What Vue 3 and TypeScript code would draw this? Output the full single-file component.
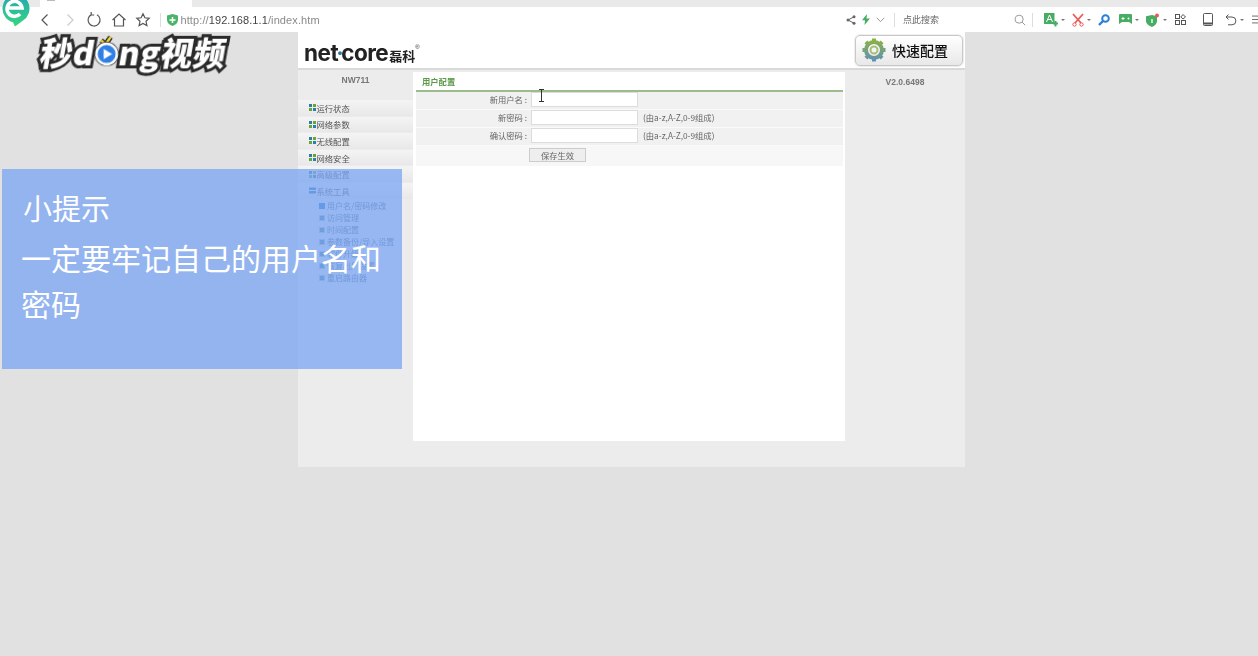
<script setup lang="ts">
const menu = ['运行状态', '网络参数', '无线配置', '网络安全', '高级配置']
const sub = ['用户名/密码修改', '访问管理', '时间配置', '参数备份/导入设置', '软件升级', '恢复出厂设置', '重启路由器']
const rows = [
  { label: '新用户名 :', hint: '' },
  { label: '新密码 :', hint: '(由a-z,A-Z,0-9组成)' },
  { label: '确认密码 :', hint: '(由a-z,A-Z,0-9组成)' },
]
</script>

<template>
  <div class="screen">
    <div class="tabs"><div class="tab"><i></i></div></div>
    <div class="toolbar">
      <div class="nav">
        <svg width="18" height="18" viewBox="0 0 18 18" class="ic"><path d="M11.500 3.500 6 9l5.500 5.500" /></svg>
        <svg width="18" height="18" viewBox="0 0 18 18" class="ic faint"><path d="M6.500 3.500 12 9l-5.500 5.500" /></svg>
        <svg width="18" height="18" viewBox="0 0 18 18" class="ic"><path d="M6.500 3.600A6 6 0 1 0 12 3.800M6.200 1v3h3" /></svg>
        <svg width="18" height="18" viewBox="0 0 18 18" class="ic"><path d="M2.500 9 9 3l6.500 6M4.500 8v7h9V8" /></svg>
        <svg width="18" height="18" viewBox="0 0 18 18" class="ic"><path d="m9 2.800 1.900 4 4.300.5-3.200 3 .9 4.300L9 12.500l-3.900 2.100.9-4.300-3.200-3 4.300-.5z" /></svg>
        <span class="sep"></span>
        <svg width="11" height="12" viewBox="0 0 11 12"><path d="M5.500 0 11 1.500V6c0 3-2.500 5-5.500 6C2.500 11 0 9 0 6V1.500z" fill="#4cb36b" /><path d="M5.500 3v6M2.500 6h6" stroke="#fff" stroke-width="1.500" /></svg>
        <span class="url">http://<b>192.168.1.1</b>/index.htm</span>
      </div>
      <div class="tools">
        <svg width="10" height="10" viewBox="0 0 10 10"><circle cx="8" cy="1.800" r="1.500" fill="#666" /><circle cx="2" cy="5" r="1.500" fill="#666" /><circle cx="8" cy="8.200" r="1.500" fill="#666" /><path d="M8 1.800 2 5l6 3.200" stroke="#666" fill="none" /></svg>
        <svg class="bolt" width="8" height="11" viewBox="0 0 8 11"><path d="M5 0 0 6.200h3L2.500 11 8 4.500H4.500z" fill="#46ad63" /></svg>
        <svg class="chev" width="9" height="6" viewBox="0 0 9 6"><path d="m.7.800 3.800 3.800L8.300.8" stroke="#999" fill="none" /></svg>
        <span class="sep"></span>
        <span class="search">点此搜索</span>
        <svg width="12" height="12" viewBox="0 0 12 12"><circle cx="5.200" cy="5.200" r="4" stroke="#999" fill="none" /><path d="m8.200 8.200 3 3" stroke="#999" /></svg>
        <span class="sep s2"></span>
        <span class="tool w1">
          <svg width="14" height="14" viewBox="0 0 14 14"><path d="M0 0h10.500v11H0z" fill="#46ad63" /><path d="M9 10.500h5M11.500 8v5.500" stroke="#46ad63" stroke-width="2" /><path d="m2.500 9 3-7 3 7M3.500 6.500h4" stroke="#fff" fill="none" /></svg><em></em>
        </span>
        <span class="tool w2">
          <svg width="12" height="14" viewBox="0 0 12 14"><path d="m1 1 8 9M11 1l-8 9" stroke="#ec5a58" stroke-width="1.800" /><circle cx="2.500" cy="11.500" r="1.700" stroke="#ec5a58" fill="none" /><circle cx="9.500" cy="11.500" r="1.700" stroke="#ec5a58" fill="none" /></svg><em></em>
        </span>
        <span class="tool w3">
          <svg width="12" height="12" viewBox="0 0 12 12"><circle cx="7.500" cy="4.500" r="3.300" stroke="#2b7fd8" stroke-width="2" fill="none" /><path d="M5 7 1 11" stroke="#2b7fd8" stroke-width="2.400" /></svg>
        </span>
        <span class="tool w4">
          <svg width="13" height="11" viewBox="0 0 13 11"><path d="M1 0h11a1 1 0 0 1 1 1v9l-3-2H3l-3 2V1a1 1 0 0 1 1-1z" fill="#46ad63" /><path d="M2.500 4.500h3M4 3v3" stroke="#fff" /><circle cx="9.500" cy="4.500" r="1" fill="#fff" /></svg><em></em>
        </span>
        <span class="tool w5">
          <svg width="14" height="14" viewBox="0 0 14 14"><path d="M6 2 11 3.200V8c0 3-2.500 5-5 6-2.500-1-6-3-6-6V3.200z" fill="#46ad63" /><path d="M6 6v4" stroke="#bde5c8" stroke-width="2" /><circle cx="11" cy="2.500" r="2" fill="#ec5a58" /></svg><em></em>
        </span>
        <span class="tool w6">
          <svg width="11" height="11" viewBox="0 0 11 11" class="line"><rect x=".5" y=".5" width="4" height="4" /><path d="M8 .5 10.500 3 8 5 5.800 3z" /><rect x=".5" y="6.500" width="4" height="4" /><rect x="6.500" y="6.500" width="4" height="4" /></svg>
        </span>
        <span class="tool w7">
          <svg width="10" height="13" viewBox="0 0 10 13" class="line"><rect x=".5" y=".5" width="9" height="12" rx="1" /><path d="M1 10.500h8" stroke-width="2" /></svg>
        </span>
        <span class="tool w8">
          <svg width="12" height="12" viewBox="0 0 12 12" class="line"><path d="M3.500.5 1 3l2.500 2.500M1 3h6a3.800 3.800 0 0 1 0 7.800H3" /></svg><em></em>
        </span>
        <span class="tool w9">
          <svg width="7" height="9" viewBox="0 0 7 9" class="line"><path d="M0 .5h7M0 4.500h7M0 8.500h7" /></svg>
        </span>
      </div>
    </div>

    <div class="logo-e">
      <svg width="30" height="27" viewBox="0 0 30 27">
        <defs><linearGradient id="eg" x1="0" y1="0" x2="0" y2="1"><stop offset="0" stop-color="#1fa6b8" /><stop offset="1" stop-color="#39d67d" /></linearGradient></defs>
        <path d="M15-6a14.500 14.500 0 0 1 8 26.600L15 26.500l-2-4.200A14.500 14.500 0 0 1 15-6z" fill="url(#eg)" />
        <path d="M7 8h15A7.500 7.500 0 1 0 20 14" stroke="#fff" stroke-width="3.600" fill="none" />
      </svg>
    </div>

    <div class="brand">
      <span>秒d</span><span class="play"><svg width="25" height="32" viewBox="0 0 25 32">
        <path d="M7 6.500 11.500 10l5-7" stroke="#222" stroke-width="5" fill="none" />
        <path d="M7 6.500 11.500 10l5-7" stroke="#f2d83a" stroke-width="2.400" fill="none" />
        <circle cx="12.500" cy="20" r="11.500" fill="#fff" stroke="#222" stroke-width="1.500" />
        <circle cx="12.500" cy="20" r="9" fill="#2f80e6" />
        <path d="M9.500 14.800v10.400l8.500-5.200z" fill="#fff" />
      </svg></span><span>ng视频</span>
    </div>

    <div class="page">
      <header class="head">
        <div class="nc"><span class="nc-en">net<i>·</i>core</span><span class="nc-cn">磊科</span><sup>®</sup></div>
        <div class="quick">
          <svg width="24" height="24" viewBox="0 0 24 24">
            <defs><linearGradient id="gg" gradientUnits="userSpaceOnUse" x1="0" y1="0" x2="0" y2="24"><stop offset="0" stop-color="#8fb53a" /><stop offset="1" stop-color="#5f8ebd" /></linearGradient></defs>
            <circle cx="12" cy="12" r="8" fill="none" stroke="url(#gg)" stroke-width="4" />
            <path d="M12 .5v4M12 19.500v4M.5 12h4M19.500 12h4M3.900 3.900l2.800 2.800M17.300 17.300l2.800 2.800M20.100 3.900l-2.800 2.800M6.700 17.300l-2.800 2.800" stroke="url(#gg)" stroke-width="4" />
            <circle cx="12" cy="12" r="3.500" fill="none" stroke="#a9bd7a" stroke-width="2" />
          </svg>
          <span>快速配置</span>
        </div>
      </header>
      <div class="body">
        <aside class="side">
          <div class="model">NW711</div>
          <div v-for="m in menu" :key="m" class="menu">
            <svg width="7" height="7" viewBox="0 0 7 7"><path d="M0 0h3v3H0z" fill="#2a7fa8" /><path d="M4 0h3v3H4z" fill="#6aa33a" /><path d="M0 4h3v3H0z" fill="#6aa33a" /><path d="M4 4h3v3H4z" fill="#2a7fa8" /></svg>
            {{ m }}
          </div>
          <div class="menu">
            <svg width="7" height="7" viewBox="0 0 7 7"><path d="M0 .5h7v2.500H0zM0 4h7v2.500H0z" fill="#2a6fa8" /></svg>
            系统工具
          </div>
          <div class="subs">
            <div v-for="(s, i) in sub" :key="s" class="sub">
              <span class="dot" :class="{ on: i === 0 }"></span>{{ s }}
            </div>
          </div>
        </aside>
        <main class="main">
          <div class="title">用户配置</div>
          <div v-for="r in rows" :key="r.label" class="row">
            <label>{{ r.label }}</label>
            <span class="input"></span>
            <span class="hint">{{ r.hint }}</span>
          </div>
          <div class="row last"><label></label><span class="save">保存生效</span></div>
        </main>
        <aside class="ver">V2.0.6498</aside>
      </div>
    </div>

    <svg class="cursor" width="7" height="13" viewBox="0 0 7 13"><path d="M1 .5h5M1 12.500h5M3.500 .5v12" stroke="#333" fill="none" /></svg>

    <div class="tip">
      <div class="tip-h">小提示</div>
      <div class="tip-b">一定要牢记自己的用户名和密码</div>
    </div>
  </div>
</template>

<style scoped>
.screen {
  position: relative;
  width: 1258px;
  height: 656px;
  overflow: hidden;
  background: #e1e1e1;
  font-family: "Noto Sans CJK SC", "Liberation Sans", sans-serif;
}
.tabs {
  height: 7px;
  background: #e9e9e9;
  box-sizing: border-box;
  padding-left: 40px;
}
.tab {
  width: 152px;
  height: 7px;
  background: #fff;
}
.tab i {
  display: block;
  width: 8px;
  height: 1px;
  margin-left: 7px;
  background: #bbb;
}
.toolbar {
  height: 25px;
  background: #fff;
  display: flex;
  justify-content: space-between;
  align-items: center;
  filter: blur(0.3px);
}
.nav {
  display: flex;
  align-items: center;
  padding-left: 36px;
  gap: 6.500px;
}
.ic {
  fill: none;
  stroke: #555;
  stroke-width: 1.200;
}
.ic.faint {
  stroke: #ccc;
}
.sep {
  width: 1px;
  height: 14px;
  background: #ddd;
  margin: 0 4px 0 1px;
}
.nav .sep {
  margin: 0 0 0 1px;
}
.url {
  font: 11px "Liberation Sans", sans-serif;
  color: #8a8a8a;
  margin-left: -4px;
  letter-spacing: 0.1px;
}
.url b {
  font-weight: 400;
  color: #444;
}
.tools {
  display: flex;
  align-items: center;
}
.tools > svg:first-child {
  margin-right: 6px;
}
.chev {
  margin: 0 8px 0 6px;
}
.search {
  width: 111px;
  margin-left: 4px;
  font-size: 9px;
  color: #666;
}
.s2 {
  margin: 0 0 0 6px;
}
.tool {
  display: flex;
  align-items: center;
  box-sizing: border-box;
  height: 16px;
  flex: none;
}
.tool em {
  width: 0;
  height: 0;
  margin-left: 3px;
  border: 2px solid transparent;
  border-top: 2.500px solid #777;
  border-bottom: 0;
}
.w1 { width: 28px; margin-left: 11px; }
.w2 { width: 26px; }
.w3 { width: 21px; }
.w4 { width: 27px; }
.w5 { width: 29px; }
.w6 { width: 28px; }
.w7 { width: 22px; }
.w8 { width: 27px; }
.w9 { width: 6px; overflow: hidden; }
.line {
  fill: none;
  stroke: #555;
}
.logo-e {
  position: absolute;
  left: 0;
  top: 0;
  line-height: 0;
}
.brand {
  position: absolute;
  left: 41px;
  top: 26px;
  width: 200px;
  height: 50px;
  display: flex;
  align-items: center;
  font-size: 32px;
  letter-spacing: 0.7px;
  line-height: 50px;
  font-weight: 900;
  color: #fff;
  transform: skewX(-10deg);
  -webkit-text-stroke: 6px #2a2a2a;
  paint-order: stroke fill;
  white-space: nowrap;
  filter: blur(0.4px);
}
.play {
  width: 25px;
  height: 32px;
  margin: -2px 0 0 -1px;
  line-height: 0;
  transform: skewX(10deg);
}
.page {
  position: absolute;
  left: 298px;
  top: 32px;
  width: 667px;
  height: 435px;
  background: #ececec;
  display: flex;
  flex-direction: column;
  filter: blur(0.35px);
}
.head {
  height: 36px;
  background: #fff;
  border-bottom: 2px solid #d9d9d9;
  display: flex;
  align-items: center;
  justify-content: space-between;
  padding: 0 2px 0 6px;
}
.nc {
  display: flex;
  align-items: baseline;
  color: #222;
  white-space: nowrap;
  margin-top: 4px;
}
.nc-en {
  font: 700 22.500px "Inter", sans-serif;
  letter-spacing: -0.5px;
}
.nc-en i {
  font-style: normal;
  color: #2a7fa8;
  margin: 0 -2px;
}
.nc-cn {
  font-size: 13px;
  font-weight: 700;
  margin-left: 1px;
}
.nc sup {
  font: 6px "Liberation Sans", sans-serif;
  align-self: flex-start;
  margin-top: 5px;
}
.quick {
  width: 108px;
  height: 31px;
  box-sizing: border-box;
  border: 1px solid #c8c8c8;
  border-radius: 5px;
  background: linear-gradient(#fff, #e8e8e8);
  box-shadow: 0 0 0 1px #eee;
  display: flex;
  align-items: center;
  gap: 6px;
  padding-left: 6px;
  font-size: 14px;
  font-weight: 500;
  color: #111;
}
.body {
  flex: 1;
  display: flex;
  padding-top: 2px;
  align-items: flex-start;
}
.side {
  width: 115px;
  flex: none;
}
.model,
.ver {
  font: 700 8.500px/14px "Liberation Sans", sans-serif;
  color: #777;
  text-align: center;
  padding-top: 3px;
}
.model {
  height: 27px;
  box-sizing: border-box;
  margin-bottom: 1px;
  padding-top: 1px;
}
.menu {
  height: 16.600px;
  box-sizing: border-box;
  display: flex;
  align-items: center;
  gap: 0.500px;
  padding-left: 11px;
  font-size: 8.300px;
  color: #555;
  background: linear-gradient(#f4f4f4, #e8e8e8);
  border-bottom: 1px solid #ececec;
}
.subs {
  padding: 0 0 0 21px;
}
.sub {
  height: 12px;
  display: flex;
  align-items: center;
  gap: 2px;
  font-size: 8px;
  line-height: 12px;
  color: #4a6a80;
  white-space: nowrap;
}
.dot {
  width: 4px;
  height: 4px;
  background: #4a808e;
  border: 1px solid #a9c3c9;
}
.dot.on {
  background: #1a6fb0;
  border-color: #1a6fb0;
}
.main {
  width: 432px;
  height: 369px;
  flex: none;
  background: #fff;
  box-sizing: border-box;
  padding: 0 2px 0 3px;
}
.title {
  height: 20px;
  box-sizing: border-box;
  border-bottom: 2px solid #9cbc8e;
  padding-left: 6px;
  font-size: 8.300px;
  line-height: 19px;
  font-weight: 700;
  color: #5e9a4c;
}
.row {
  height: 18px;
  display: flex;
  align-items: flex-start;
  background: #f1f1f1;
  border-bottom: 1px solid #fafafa;
  box-sizing: border-box;
  font-size: 8.300px;
  color: #666;
}
.row label {
  width: 111px;
  flex: none;
  text-align: right;
  line-height: 15px;
}
.input {
  width: 107px;
  height: 15px;
  box-sizing: border-box;
  margin-left: 4px;
  background: #fff;
  border: 1px solid #dcdcdc;
}
.hint {
  margin-left: 5px;
  line-height: 15px;
}
.row.last {
  height: 20px;
  background: #f7f7f7;
  border: 0;
  padding-top: 2px;
}
.save {
  width: 57px;
  height: 14px;
  margin-left: 2px;
  box-sizing: border-box;
  border: 1px solid #ccc;
  background: #eee;
  text-align: center;
  line-height: 12px;
  color: #666;
}
.ver {
  flex: 1;
}
.cursor {
  position: absolute;
  left: 538px;
  top: 89px;
}
.tip {
  position: absolute;
  left: 2px;
  top: 169px;
  width: 400px;
  height: 200px;
  box-sizing: border-box;
  padding: 15px 19px;
  background: rgba(124, 166, 243, 0.77);
  color: #fff;
  font-weight: 400;
}
.tip-h {
  font-size: 29px;
  line-height: 46px;
  padding-left: 2px;
}
.tip-b {
  margin-top: 5px;
  font-size: 30px;
  line-height: 45.500px;
}
</style>
